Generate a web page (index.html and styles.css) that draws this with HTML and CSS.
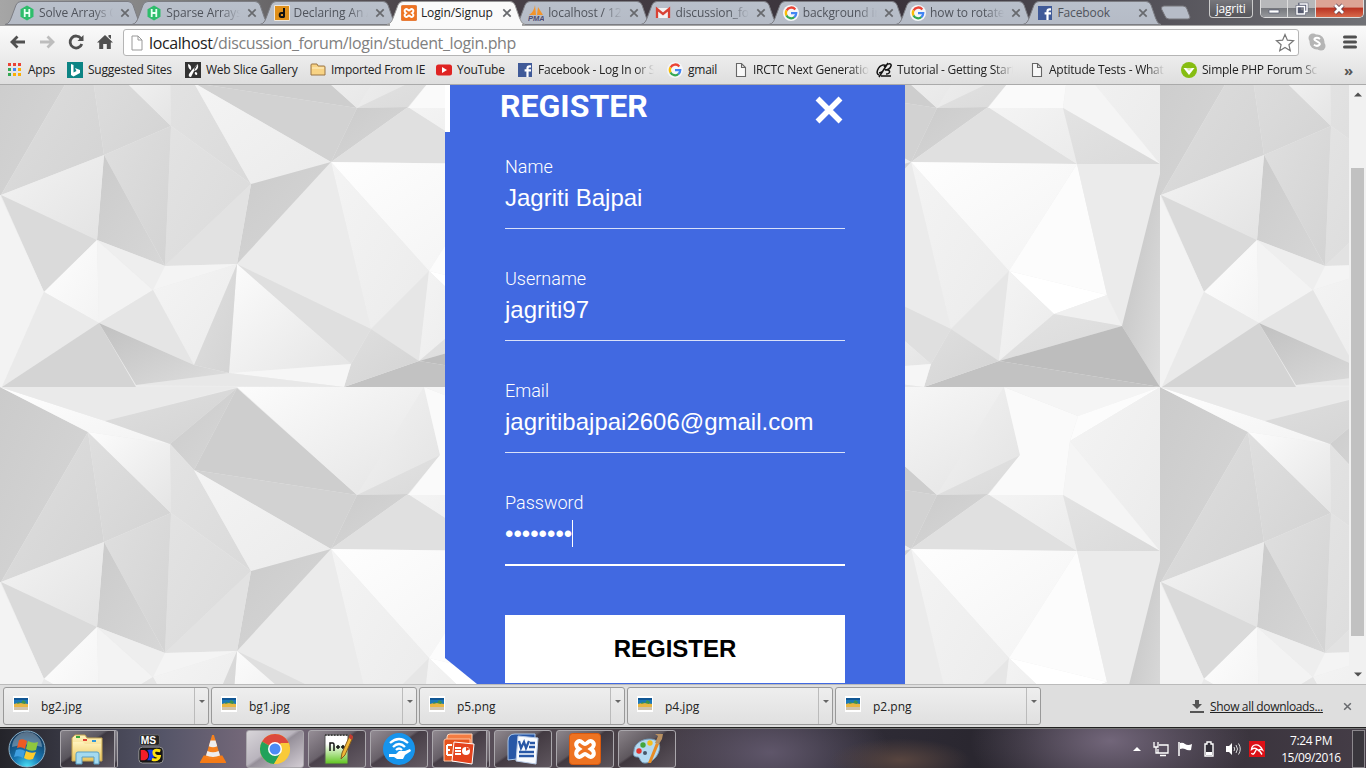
FILE: index.html
```html
<!DOCTYPE html>
<html lang="en">
<head>
<meta charset="utf-8">
<title>Login/Signup</title>
<link rel="stylesheet" href="styles.css">
</head>
<body>
<svg class="defs" width="0" height="0" aria-hidden="true">
<defs>
<linearGradient id="tabfill" x1="0" y1="0" x2="0" y2="1"><stop offset="0" stop-color="#b9c0cb"/><stop offset="1" stop-color="#b5bbc6"/></linearGradient>
<linearGradient id="g1" x1="0" y1="0" x2="1" y2="1"><stop offset="0" stop-color="#cbcbcb"/><stop offset="1" stop-color="#d7d7d7"/></linearGradient>
<linearGradient id="g2" x1="0" y1="0" x2="1" y2="1"><stop offset="0" stop-color="#dfdfdf"/><stop offset="1" stop-color="#d3d3d3"/></linearGradient>
<linearGradient id="g3" x1="0" y1="0" x2="1" y2="1"><stop offset="0" stop-color="#e3e3e3"/><stop offset="1" stop-color="#dadada"/></linearGradient>
<linearGradient id="g4" x1="0" y1="0" x2="1" y2="1"><stop offset="0" stop-color="#f3f3f3"/><stop offset="1" stop-color="#e3e3e3"/></linearGradient>
<linearGradient id="g5" x1="0" y1="0" x2="1" y2="1"><stop offset="0" stop-color="#fefefe"/><stop offset="1" stop-color="#f3f3f3"/></linearGradient>
<linearGradient id="g6" x1="0" y1="0" x2="1" y2="1"><stop offset="0" stop-color="#fcfcfc"/><stop offset="1" stop-color="#e4e4e4"/></linearGradient>
<linearGradient id="g7" x1="0" y1="0" x2="1" y2="1"><stop offset="0" stop-color="#f4f4f4"/><stop offset="1" stop-color="#ebebeb"/></linearGradient>
<linearGradient id="g8" x1="0" y1="0" x2="1" y2="1"><stop offset="0" stop-color="#c0c0c0"/><stop offset="1" stop-color="#dedede"/></linearGradient>
<radialGradient id="orb" cx=".5" cy="1" r=".95"><stop offset="0" stop-color="#4be3f7"/><stop offset=".4" stop-color="#1878b4"/><stop offset="1" stop-color="#103355"/></radialGradient>
<linearGradient id="folder" x1="0" y1="0" x2="0" y2="1"><stop offset="0" stop-color="#fff3bd"/><stop offset="1" stop-color="#ecc75f"/></linearGradient>
<linearGradient id="green" x1="0" y1="0" x2="0" y2="1"><stop offset=".3" stop-color="#fff"/><stop offset="1" stop-color="#5fc41e"/></linearGradient>
<symbol id="tab" viewBox="0 0 138 25"><path d="M0 24.500C4 23.500 5 21 6.500 17L11 5Q12.500 1.500 16 1.500H123Q126.500 1.500 128 5L132.500 18Q134.500 24 138 24.500Z"/></symbol>
<symbol id="close" viewBox="0 0 10 10"><path d="M1.300 1.300L8.700 8.700M8.700 1.300L1.300 8.700" stroke="#686a6e" stroke-width="1.700"/></symbol>
<symbol id="hr" viewBox="0 0 16 16"><path d="M8 .5L14.500 4.200V11.800L8 15.500L1.500 11.800V4.200Z" fill="#2ebd6b"/><path d="M5.700 4V12M10.300 4V12M5.700 8H10.300" stroke="#e5fff0" stroke-width="1.800"/></symbol>
<symbol id="google" viewBox="0 0 16 16"><circle cx="8" cy="8" r="8" fill="#f5f6f8"/><path d="M12.300 4.400A5.200 5.200 0 0 0 3.600 5.500" stroke="#ea4335" stroke-width="2.300" fill="none"/><path d="M3.600 5.400A5.200 5.200 0 0 0 3.600 10.700" stroke="#fbbc05" stroke-width="2.300" fill="none"/><path d="M3.500 10.500A5.200 5.200 0 0 0 11.500 12" stroke="#34a853" stroke-width="2.300" fill="none"/><path d="M8 8.200H13.200A5.200 5.200 0 0 1 11.300 12.100" stroke="#4285f4" stroke-width="2.300" fill="none"/></symbol>
<symbol id="fb" viewBox="0 0 16 16"><path d="M1 1H15V15H1Z" fill="#405a98"/><path d="M10.500 15V6.300Q10.500 4.300 12.500 4.300H14M7.600 8.400H14" stroke="#fff" stroke-width="2.200" fill="none"/></symbol>
<symbol id="doc" viewBox="0 0 16 16"><path d="M3.500 1.500H8.500L12.500 5.500V14.500H3.500ZM8.500 1.500V5.500H12.500" fill="#f8f8f8" stroke="#666" stroke-width="1.100"/></symbol>
<symbol id="xampp" viewBox="0 0 32 32"><rect x=".5" y=".5" width="31" height="31" rx="3" fill="#ee7322" stroke="#d9590e"/><path d="M9 8.500C12 6.500 14 11 16 11S20 6.500 23 8.500S25 14 22 16C25 18 26 21.500 23 23.500S18 21 16 21S12 25.500 9 23.500S7 18 10 16C7 14 6 10.500 9 8.500Z" fill="none" stroke="#fff" stroke-width="4"/></symbol>
<symbol id="pic" viewBox="0 0 16 16"><path d="M0 0H16V16H0Z" fill="#fff"/><path d="M1 2H15V8H1Z" fill="#1b78b8"/><path d="M1 2H15V4H1Z" fill="#105694"/><path d="M1 8Q6 6 15 8V11H1Z" fill="#e8b642"/><path d="M4 8L5 6L8 7L10 4L13 6L12 8L8 7Z" fill="#3f9348"/><path d="M1 11H15V14H1Z" fill="#cfc3ad"/></symbol>
<symbol id="tile" viewBox="0 0 580 387">
<rect width="580" height="387" fill="#ececec"/>
<path d="M0 0L88 45L1 195H0Z" fill="url(#g1)"/><path d="M88 45L104 155L1 195Z" fill="url(#g2)"/><path d="M88 45L171 126L104 155Z" fill="url(#g2)"/><path d="M88 45L170 57L171 126Z" fill="url(#g6)"/><path d="M0 0L105 34L170 57L88 45Z" fill="url(#g5)"/><path d="M0 0H237L105 34Z" fill="#eaeaea"/><path d="M105 34L237 1L170 57Z" fill="url(#g2)"/><path d="M170 57L237 1L194 83Z" fill="url(#g1)"/><path d="M170 57L194 83L251 184L171 126Z" fill="url(#g3)"/>
<path d="M237 1L194 83L357 108Z" fill="#cecece"/><path d="M194 83L357 108L331 162Z" fill="#d2d2d2"/><path d="M194 83L331 162L251 184Z" fill="url(#g7)"/><path d="M237 0H424L357 108Z" fill="url(#g6)"/><path d="M424 0L440 68L357 108Z" fill="url(#g4)"/><path d="M440 68L408 107L357 108Z" fill="url(#g3)"/><path d="M357 108L408 107L331 162Z" fill="url(#g1)"/><path d="M408 107L497 164L331 162Z" fill="#e0e0e0"/><path d="M408 107L483 108L497 164Z" fill="url(#g7)"/><path d="M424 0L498 29L490 54L483 108H408L440 68Z" fill="#fafafa"/><path d="M424 0H580L498 29Z" fill="#f5f5f5"/><path d="M498 29L580 0L490 54Z" fill="#fcfcfc"/><path d="M490 54L580 0V164Z" fill="url(#g7)"/><path d="M490 54L580 164L483 108Z" fill="#f5f5f5"/><path d="M483 108L580 164H497Z" fill="url(#g3)"/>
<path d="M331 162L497 164L429 271Z" fill="url(#g5)"/><path d="M331 162L429 271L371 329Z" fill="url(#g7)"/><path d="M497 164L429 271L527 295Z" fill="#fcfcfc"/><path d="M429 271L527 295L474 314Z" fill="#fff"/><path d="M527 295L542 326L474 314Z" fill="#f0f0f0"/><path d="M497 164H580V174L542 326L527 295Z" fill="#ebebeb"/><path d="M580 174V387L542 326Z" fill="url(#g8)"/><path d="M429 271L371 329L419 361Z" fill="#e6e6e6"/><path d="M429 271L474 314L419 361Z" fill="url(#g7)"/><path d="M474 314L542 326L419 361Z" fill="url(#g3)"/><path d="M419 361L542 326L580 387Z" fill="#bdbdbd"/><path d="M419 361L580 387H344Z" fill="#c2c2c2"/><path d="M371 329L419 361L344 387L351 364Z" fill="url(#g2)"/>
<path d="M331 162L371 329L237 264Z" fill="#ebebeb"/><path d="M237 264L371 329L351 364Z" fill="#dfdfdf"/><path d="M237 264L351 364L229 373Z" fill="url(#g6)"/><path d="M229 373L351 364L344 387Z" fill="#f6f6f6"/><path d="M136 385L229 373L344 387Z" fill="#e8e8e8"/><path d="M251 184L331 162L237 264Z" fill="url(#g1)"/><path d="M251 184L237 264L165 266Z" fill="#e2e2e2"/><path d="M171 126L251 184L165 266Z" fill="url(#g3)"/><path d="M104 155L171 126L165 266Z" fill="url(#g2)"/><path d="M104 155L97 240L165 266Z" fill="url(#g1)"/><path d="M1 195L104 155L97 240Z" fill="url(#g4)"/><path d="M1 195L97 240L44 292Z" fill="#dadada"/><path d="M0 195L44 292L2 387H0Z" fill="#f3f3f3"/><path d="M97 240L44 292L99 323Z" fill="url(#g5)"/><path d="M97 240L153 290L99 323Z" fill="#f3f3f3"/><path d="M97 240L165 266L153 290Z" fill="#eee"/><path d="M165 266L237 264L153 290Z" fill="#f4f4f4"/><path d="M153 290L237 264L194 365Z" fill="url(#g7)"/><path d="M237 264L229 373L194 365Z" fill="url(#g2)"/><path d="M99 323L153 290L194 365Z" fill="#e5e5e5"/><path d="M44 292L99 323L2 387Z" fill="#eaeaea"/><path d="M2 387L99 323L136 387Z" fill="#d4d4d4"/><path d="M99 323L194 365L229 373L136 385Z" fill="url(#g8)"/>
</symbol>
</defs>
</svg>

<header class="strip">
<nav class="tabs">
<div class="tab"><svg class="shape"><use href="#tab"/></svg><svg class="fav"><use href="#hr"/></svg><span class="tt">Solve Arrays Co</span><svg class="x"><use href="#close"/></svg></div>
<div class="tab"><svg class="shape"><use href="#tab"/></svg><svg class="fav"><use href="#hr"/></svg><span class="tt">Sparse Arrays |</span><svg class="x"><use href="#close"/></svg></div>
<div class="tab"><svg class="shape"><use href="#tab"/></svg><svg class="fav" viewBox="0 0 16 16"><path d="M.5.5H15.500V15.500H.5Z" fill="#e0901a" stroke="#efe7dc"/><path d="M10 3V12.500M10 8H7.300A1.600 2 0 0 0 7.300 12H10" stroke="#111" stroke-width="2" fill="none"/></svg><span class="tt">Declaring An Ar</span><svg class="x"><use href="#close"/></svg></div>
<div class="tab active"><svg class="shape"><use href="#tab"/></svg><svg class="fav"><use href="#xampp"/></svg><span class="tt whole">Login/Signup</span><svg class="x"><use href="#close"/></svg></div>
<div class="tab"><svg class="shape"><use href="#tab"/></svg><svg class="fav" viewBox="0 0 16 16"><path d="M7 0L8 10H1Q6 7 7 0ZM10 2L15 10H9Z" fill="#f2942b"/><text x="0" y="16" class="pma">PMA</text></svg><span class="tt">localhost / 127.</span><svg class="x"><use href="#close"/></svg></div>
<div class="tab"><svg class="shape"><use href="#tab"/></svg><svg class="fav" viewBox="0 0 16 16"><path d="M2 3H14V13H2Z" fill="#f2f2f2"/><path d="M2 13V4L8 9L14 4V13" fill="none" stroke="#d94235" stroke-width="2.300"/></svg><span class="tt">discussion_foru</span><svg class="x"><use href="#close"/></svg></div>
<div class="tab"><svg class="shape"><use href="#tab"/></svg><svg class="fav"><use href="#google"/></svg><span class="tt">background im</span><svg class="x"><use href="#close"/></svg></div>
<div class="tab"><svg class="shape"><use href="#tab"/></svg><svg class="fav"><use href="#google"/></svg><span class="tt">how to rotate t</span><svg class="x"><use href="#close"/></svg></div>
<div class="tab"><svg class="shape"><use href="#tab"/></svg><svg class="fav"><use href="#fb"/></svg><span class="tt whole">Facebook</span><svg class="x"><use href="#close"/></svg></div>
</nav>
<svg class="newtab" viewBox="0 0 32 16"><path d="M4 1H23Q26 1 27 4L30 12Q30 14 28 14H9Q6 14 5 11L1.500 4Q1 1 4 1Z" fill="#b6bcc7" stroke="#77767b"/></svg>
<div class="user">jagriti</div>
<div class="winbtns"><span><svg viewBox="0 0 14 14"><path d="M2 8H12V11H2Z" fill="#fff" stroke="#555a70" stroke-width=".7"/></svg></span><span><svg viewBox="0 0 14 14"><path d="M4.500 2H12V9.500H4.500ZM2 4.500H9.500V12H2Z" fill="none" stroke="#555a70" stroke-width="2.600"/><path d="M4.500 2H12V9.500H9.500M2 4.500H9.500V12H2Z" fill="none" stroke="#fff" stroke-width="1.500"/></svg></span><span class="red"><svg viewBox="0 0 14 14"><path d="M3 3L11 11M11 3L3 11" stroke="#5b3a48" stroke-width="4.200"/><path d="M3 3L11 11M11 3L3 11" stroke="#fff" stroke-width="2.800"/></svg></span></div>
</header>

<div class="toolbar">
<div class="nav">
<svg viewBox="0 0 18 18"><path d="M16 9H3M8.500 3.500L3 9L8.500 14.500" class="bold"/></svg>
<svg viewBox="0 0 18 18"><path d="M2 9H15M9.500 3.500L15 9L9.500 14.500" class="bold pale"/></svg>
<svg viewBox="0 0 18 18"><path d="M14 5.500A6 6 0 1 0 14.800 11" class="bold"/><path d="M16.500 2V8H10.500Z" fill="#505050"/></svg>
<svg viewBox="0 0 18 18"><path d="M9 2L17 9.500H14.800V16H10.800V11H7.200V16H3.200V9.500H1ZM12.500 2H15V6L12.500 4Z" fill="#505050"/></svg>
</div>
<div class="url"><svg class="page" viewBox="0 0 16 16"><path d="M3 1H9L13 5V15H3ZM9 1V5H13" fill="#fff" stroke="#999"/></svg><span class="host">localhost</span><span>/discussion_forum/login/student_login.php</span>
<svg class="star" viewBox="0 0 20 20"><path d="M10 1.500L12.400 7.200L18.500 7.700L13.900 11.700L15.300 17.700L10 14.500L4.700 17.700L6.100 11.700L1.500 7.700L7.600 7.200Z" fill="#fff" stroke="#777" stroke-width="1.200"/></svg></div>
<svg class="skype" viewBox="0 0 20 20"><circle cx="10" cy="10" r="7.500" fill="#b5b5b5"/><circle cx="6" cy="6" r="4.500" fill="#b5b5b5"/><circle cx="14" cy="14" r="4.500" fill="#b5b5b5"/><path d="M13 7Q10 4.800 7.600 6.600C6 9 13.500 9.500 12.800 12.300Q10.500 15.300 6.900 12.700" stroke="#fff" stroke-width="2" fill="none"/></svg>
<svg class="menu" viewBox="0 0 14 14"><path d="M1.500 2H12.500M1.500 7H12.500M1.500 12H12.500" stroke="#505050" stroke-width="3" stroke-linecap="round"/></svg>
</div>

<div class="bookmarks">
<div><svg viewBox="0 0 16 16"><path d="M1 1h3v3H1z M6 1h3v3H6z M11 1h3v3h-3z" fill="#ea4335"/><path d="M1 6h3v3H1z M1 11h3v3H1z" fill="#34a853"/><path d="M6 6h3v3H6z" fill="#4285f4"/><path d="M11 6h3v3h-3z M6 11h3v3H6z M11 11h3v3h-3z" fill="#fbaf05"/></svg><span>Apps</span></div>
<div><svg viewBox="0 0 16 16"><path d="M0 0H16V16H0Z" fill="#0c8484"/><path d="M4 2L6.500 3V10.500L9.500 9L8 6L13 8V11L6.500 14.500L4 13Z" fill="#fff"/></svg><span>Suggested Sites</span></div>
<div><svg viewBox="0 0 16 16"><path d="M0 0H16V16H0Z" fill="#333"/><path d="M3 2Q7 3 6 8Q3 7 3 2ZM13 2Q9 4 9 9L6 15Q3 15 4 12L7 8M9 9Q14 8 13 2M10 10Q13 10 12 13Q9 13 10 10" fill="#fff"/></svg><span>Web Slice Gallery</span></div>
<div><svg viewBox="0 0 16 16"><path d="M1 3Q1 2 2 2H7L8 4H14Q15 4 15 5V13H1Z" fill="#f8d384" stroke="#9a7544"/><path d="M2 6H14" stroke="#fff1c8"/></svg><span>Imported From IE</span></div>
<div><svg viewBox="0 0 16 16"><rect y="2.500" width="16" height="11" rx="2.500" fill="#df2423"/><path d="M6 5L11 8L6 11Z" fill="#fff"/></svg><span>YouTube</span></div>
<div class="cut"><svg><use href="#fb"/></svg><span>Facebook - Log In or S</span></div>
<div><svg><use href="#google"/></svg><span>gmail</span></div>
<div class="cut doc"><svg><use href="#doc"/></svg><span>IRCTC Next Generation</span></div>
<div class="cut"><svg viewBox="0 0 16 16"><path d="M3 13C-1 12 2 4 7 3S8 10 3 11M12 1L3 15M8 5C11 1 16 1 15 4S11 8 9 8C15 7 15 12 10 12M5 14H15" fill="none" stroke="#111" stroke-width="1.500"/></svg><span>Tutorial - Getting Start</span></div>
<div class="cut doc aptitude"><svg><use href="#doc"/></svg><span>Aptitude Tests - What i</span></div>
<div class="cut"><svg viewBox="0 0 16 16"><circle cx="8" cy="8" r="8" fill="#86bd12"/><path d="M2.500 6H13.500L8 13Z" fill="#fff"/><path d="M5 6H11L8 9Z" fill="#d8ecaa"/></svg><span>Simple PHP Forum Scri</span></div>
<b>»</b>
</div>

<main class="view">
<svg class="bg" width="1349" height="687" viewBox="0 0 1349 687"><use href="#tile" width="580" height="387"/><use href="#tile" x="580" width="580" height="387"/><use href="#tile" x="1160" width="580" height="387"/><use href="#tile" y="387" width="580" height="387"/><use href="#tile" x="580" y="387" width="580" height="387"/><use href="#tile" x="1160" y="387" width="580" height="387"/></svg>
<section class="panel">
<div class="head"><h1>REGISTER</h1><svg viewBox="0 0 28 28"><path d="M2.500 2.500L25.500 25.500M25.500 2.500L2.500 25.500" stroke="#fff" stroke-width="5.500"/></svg></div>
<div class="field"><label>Name</label><p>Jagriti Bajpai</p></div>
<div class="field"><label>Username</label><p>jagriti97</p></div>
<div class="field"><label>Email</label><p>jagritibajpai2606@gmail.com</p></div>
<div class="field focus"><label>Password</label><p><span class="dots">••••••••</span><i></i></p></div>
<button>REGISTER</button>
</section>
<div class="edge"></div>
<aside class="scroll"><svg viewBox="0 0 8 5"><path d="M0 4.500L4 .5L8 4.500Z" fill="#505050"/></svg><div class="thumb"></div><svg viewBox="0 0 8 5"><path d="M0 .5L4 4.500L8 .5Z" fill="#505050"/></svg></aside>
</main>

<div class="downloads">
<div class="dl"><svg><use href="#pic"/></svg><span>bg2.jpg</span><b></b></div>
<div class="dl"><svg><use href="#pic"/></svg><span>bg1.jpg</span><b></b></div>
<div class="dl"><svg><use href="#pic"/></svg><span>p5.png</span><b></b></div>
<div class="dl"><svg><use href="#pic"/></svg><span>p4.jpg</span><b></b></div>
<div class="dl"><svg><use href="#pic"/></svg><span>p2.png</span><b></b></div>
<svg class="dlicon" viewBox="0 0 14 14"><path d="M5 0H9V4H12L7 9L2 4H5ZM0 11H14V13H0Z" fill="#555"/></svg><a>Show all downloads...</a><svg class="dlx"><use href="#close"/></svg>
</div>

<footer class="taskbar">
<svg class="start" viewBox="0 0 38 38"><circle cx="19" cy="19" r="18" fill="url(#orb)" stroke="#8eb4cc"/><path d="M4 17A15 15 0 0 1 34 17Q19 12 4 17Z" fill="#fff" opacity=".3"/><path d="M11 10Q15 8 19 11L17 19Q13 16 9 18Z" fill="#ed5b24"/><path d="M20 11Q25 14 30 12L28 20Q23 22 18 19Z" fill="#8fc73e"/><path d="M8 20Q13 18 17 21L15 28Q11 25 6 27Z" fill="#3f9fe0"/><path d="M18 21Q23 24 28 22L25 29Q20 31 16 28Z" fill="#fccb2d"/></svg>
<div class="btn multi"><svg viewBox="0 0 32 32"><path d="M1 5L4 2H14L16 5H31V28H1Z" fill="url(#folder)" stroke="#c5a552"/><path d="M5 3H9V5H5Z" fill="#37a53b"/><path d="M12 6H16V8H12Z" fill="#dd4132"/><path d="M21 7H25V9H21Z" fill="#3498d8"/><path d="M2 9H12L14 11H30V27H2Z" fill="url(#folder)"/><path d="M5 31V21Q5 19 7 19H26Q28 19 28 21V31H23V24H11V31Z" fill="#a4daf0" stroke="#5a9fc4"/></svg></div>
<div class="plain"><svg viewBox="0 0 32 32"><rect x="4" y="1" width="21" height="11" rx="2" fill="#222" stroke="#666"/><text x="5" y="11" class="ms">MS</text><rect x="3" y="14" width="26" height="17" rx="4" fill="#161616" stroke="#999"/><path d="M5 17H9Q13 19 13 23T9 28H5Z" fill="#f31d29"/><path d="M12 17Q21 15 20 22T12 28Q16 22 12 17Z" fill="#183be4"/><path d="M26 18Q19 16 19 20T25 24Q24 29 17 27" stroke="#ffe112" stroke-width="3" fill="none"/></svg></div>
<div class="plain"><svg viewBox="0 0 32 32"><path d="M6 23H26L30 30Q30 31 29 31H3Q2 31 2 30Z" fill="#f47b16"/><path d="M15 1H17L24 25Q16 29 8 25Z" fill="#f58220"/><path d="M13.300 7H18.700L20.500 13Q16 15 11.500 13ZM10 18Q16 21 22 18L23.500 23Q16 26 8.500 23Z" fill="#eee"/></svg></div>
<div class="btn lit"><svg viewBox="0 0 32 32"><circle cx="16" cy="16" r="15" fill="#f9ca38"/><path d="M16 16L3 8.500A15 15 0 0 1 29 8.500L31 14Z" fill="#dc4a3d"/><path d="M16 16L3 8.500A15 15 0 0 0 15 31L22 20Z" fill="#22a25b"/><path d="M16 16L22 10H29.800A15 15 0 0 1 15 31L22 19Z" fill="#f9ca38"/><circle cx="16" cy="16" r="7" fill="#fff"/><circle cx="16" cy="16" r="5.500" fill="#4c8bf5"/></svg></div>
<div class="btn"><svg viewBox="0 0 32 32"><path d="M4 2H27V31H4Z" fill="url(#green)" stroke="#555"/><path d="M4 2H27" stroke="#444" stroke-width="2" stroke-dasharray="1.500 1.500"/><path d="M9 18V10H12Q13 10 13 12V18M15 14H19M17 12V16M20 14H24M22 12V16" stroke="#111" fill="none" stroke-width="1.500"/><path d="M20 26L21 20L29 2L32 4L24 22Z" fill="#efb635" stroke="#875d1d"/><path d="M29 1L32 3L31 7L28 5Z" fill="#c33b34"/></svg></div>
<div class="btn"><svg viewBox="0 0 32 32"><circle cx="16" cy="16" r="16" fill="#1694ec"/><path d="M7 10Q16 2 25 10M10 14Q16 8 22 14M13 17Q16 14 19 17" fill="none" stroke="#fff" stroke-width="2.300"/><path d="M6 21H13L16 18H22L27 16L28 18L22 22L20 26H14L11 24H6Z" fill="#fff"/></svg></div>
<div class="btn multi"><svg viewBox="0 0 32 32"><path d="M4 4Q4 1 7 1H29V15H4Z" fill="#f47c42" stroke="#ffd5bb"/><path d="M1 8Q1 6 3 6H27V28H1Z" fill="#e6531d" stroke="#ffc6a3"/><path d="M11 9L31 11L29 31L9 28Z" fill="#e4431d" stroke="#fff"/><path d="M4 12H9M4 17H7M4 22H9M4 12V22M12 15H18M12 18H18M12 21H18" stroke="#fff" stroke-width="2"/><circle cx="23" cy="18" r="4" fill="#fff"/><path d="M23 18V14L27 16Z" fill="#e4431d"/></svg></div>
<div class="btn"><svg viewBox="0 0 32 32"><path d="M1 8Q1 1 8 1H28V24L1 27Z" fill="#2857a6" stroke="#a7c5e9"/><path d="M11 3L31 5L29 31L9 28Z" fill="#f8fbff" stroke="#b7c9e5"/><path d="M12 8L14 15L17 9L19 15L22 8" fill="none" stroke="#2857a6" stroke-width="2.300"/><path d="M23 10H28M22 14H28M12 19H27M12 23H27" stroke="#2857a6" stroke-width="2.300"/></svg></div>
<div class="btn"><svg><use href="#xampp"/></svg></div>
<div class="btn"><svg viewBox="0 0 32 32"><path d="M3 18C3 8 18 3 26 8C33 14 25 29 15 30C9 31 9 24 7 24S1 24 3 18Z" fill="#b4daf1" stroke="#739bb9"/><circle cx="8" cy="18" r="2.700" fill="#e2342e"/><circle cx="12" cy="12" r="2.700" fill="#44a63c"/><circle cx="19" cy="10" r="2.700" fill="#f2bd21"/><circle cx="14" cy="20" r="2" fill="#45576a"/><path d="M17 30L25 10L28 11L20 30Z" fill="#e68b24"/><path d="M24 10L27 3L24 1L32 1L31 6L28 11Z" fill="#b99061"/></svg></div>
<div class="tray">
<svg viewBox="0 0 16 16"><path d="M4 10L8 6L12 10Z" fill="#fff"/></svg>
<svg viewBox="0 0 16 16"><path d="M6 4H15V12H5V8M7 14.500H13M1 1V6H5V1M3 6V12H6" fill="none" stroke="#fff" stroke-width="1.300"/></svg>
<svg viewBox="0 0 16 16"><path d="M2 1V15" stroke="#fff" stroke-width="1.500"/><path d="M3 2Q6 1 8 3Q11 5 15 3L14 9Q11 10 8 8Q6 7 3 8Z" fill="#fff"/></svg>
<svg viewBox="0 0 16 16"><path d="M6 1H10V3H12V15H4V3H6Z" fill="#322f38" stroke="#fff" stroke-width="1.400"/><path d="M5 11H11V14H5Z" fill="#fff"/></svg>
<svg viewBox="0 0 16 16"><path d="M1 5H4L7 2V14L4 11H1Z" fill="#fff"/><path d="M9 6Q10.500 8 9 10M11 4Q14 8 11 12M13.500 2.500Q17 8 13.500 13.500" fill="none" stroke="#ddd"/></svg>
<svg viewBox="0 0 16 16"><path d="M0 0H16V16H0Z" fill="#dc1117"/><path d="M2.500 8.500C3 3 10 1.500 13.500 9Q11 7.500 9.500 9.500Q6.500 5.500 2.500 8.500ZM8 7.500L5 12.500Q3.500 14 2.500 12M10 9L13 13.500" fill="none" stroke="#fff" stroke-width="1.400"/></svg>
</div>
<div class="clock">7:24 PM<br>15/09/2016</div>
<div class="peek"></div>
</footer>
</body>
</html>
```
FILE: styles.css
```css
* { box-sizing: border-box; }
body { margin: 0; width: 1366px; height: 768px; overflow: hidden; font: 12px/16px "Open Sans", "Noto Sans", sans-serif; color: #222; background: #ddd; }
svg { display: block; flex: none; }
.defs { position: absolute; }
.strip { height: 25px; display: flex; align-items: flex-start; background: linear-gradient(90deg, #a6a6a6, #777 15%, #4a4349 30%, #39323a 65%, #55535a 85%, #707176); }
.tabs { display: flex; padding-left: 5px; height: 25px; }
.tab { position: relative; width: 127.3px; height: 25px; display: flex; align-items: center; padding-left: 14px; color: #50545c; }
.shape { position: absolute; left: 0; top: 0; width: 138px; height: 25px; fill: url(#tabfill); stroke: #7c7d83; stroke-width: 1; overflow: visible; }
.tab.active { z-index: 2; color: #222; }
.tab.active .shape { fill: #fafafa; stroke: #999; }
.tab.active::after { content: ""; position: absolute; left: 3px; right: -8px; bottom: -1px; height: 2px; background: #fafafa; }
.fav { position: relative; width: 16px; height: 16px; margin-right: 4px; }
.tt { position: relative; width: 78px; overflow: hidden; white-space: nowrap; letter-spacing: -.1px; -webkit-mask-image: linear-gradient(90deg, #000 70%, transparent 95%); mask-image: linear-gradient(90deg, #000 70%, transparent 95%); }
.tt.whole { -webkit-mask-image: none; mask-image: none; }
.x { position: relative; width: 10px; height: 10px; margin-left: 3px; }
.pma { font: italic bold 7.500px "Liberation Sans", sans-serif; fill: #4b4d75; }
.newtab { width: 32px; height: 16px; margin: 5px 0 0 9px; }
.user { margin-left: 17px; width: 44px; height: 18px; border: 1px solid #ccc; border-top: 0; border-radius: 0 0 4px 4px; background: linear-gradient(#77777c, #55555a); color: #fff; text-align: center; line-height: 17px; letter-spacing: -.2px; }
.winbtns { display: flex; margin-left: 7px; border: 1px solid #ddd; border-top: 0; border-radius: 0 0 5px 5px; overflow: hidden; width: 104px; height: 18px; }
.winbtns span { width: 28px; background: linear-gradient(#b7b8ba 45%, #77797e 50%, #96979b); border-right: 1px solid #ddd; display: flex; justify-content: center; align-items: center; }
.winbtns span.red { width: 47px; background: linear-gradient(#dca395 40%, #bb3524 50%, #d8694b); border: 0; }
.winbtns svg { width: 14px; height: 14px; }
.toolbar { height: 33px; display: flex; align-items: center; background: linear-gradient(#fafafa, #ececec); border-top: 1px solid #a5a5a5; padding-left: 9px; }
.nav { display: flex; gap: 11px; width: 114px; }
.nav svg { width: 18px; height: 18px; }
.bold { fill: none; stroke: #505050; stroke-width: 2.800; }
.pale { stroke: #bdbdbd; }
.url { width: 1176px; height: 27px; margin-top: 1px; background: #fff; border: 1px solid #b5b5b5; border-radius: 3px; display: flex; align-items: center; font-size: 16px; color: #808080; padding-left: 5px; letter-spacing: -.38px; }
.url .page { width: 16px; height: 18px; margin-right: 4px; }
.host { color: #222; }
.star { width: 20px; height: 20px; margin-left: auto; margin-right: 3px; }
.skype { width: 20px; height: 20px; margin-left: 8px; }
.menu { width: 14px; height: 14px; margin-left: 16px; }
.bookmarks { height: 27px; border-bottom: 1px solid #aaa; background: linear-gradient(#ececec, #dedede); padding: 0 0 2px 7px; display: grid; align-items: center; grid-template-columns: 60px 118px 125px 126px 81px 150px 66px 143px 156px 149px 163px 20px; }
.bookmarks div { display: flex; align-items: center; white-space: nowrap; overflow: hidden; letter-spacing: -.24px; }
.bookmarks svg { width: 16px; height: 16px; margin-right: 5px; }
.bookmarks .doc svg { margin-right: 4px; }
.bookmarks .aptitude { margin-left: -3px; }
.bookmarks .cut span { width: 116px; overflow: hidden; -webkit-mask-image: linear-gradient(90deg, #000 84%, transparent); mask-image: linear-gradient(90deg, #000 84%, transparent); }
.bookmarks b { font-size: 15px; color: #555; }
.view { position: relative; height: 599px; overflow: hidden; display: flex; justify-content: flex-end; }
.bg { position: absolute; left: 0; top: -85px; }
.panel { position: absolute; left: 445px; top: 0; width: 460px; height: 599px; padding: 0 60px; background: #4169e1; clip-path: polygon(0 0, 100% 0, 100% 100%, 32px 100%, 0 573px); color: #fff; }
.edge { position: absolute; left: 445px; top: 0; width: 5px; height: 47px; background: #fff; }
.head { display: flex; justify-content: space-between; height: 71px; margin-left: -5px; }
.head h1 { margin: 0; font: bold 32px/42px Roboto, sans-serif; }
.head svg { width: 28px; height: 28px; margin: 11px 2px 0 0; }
.field { height: 73px; margin-bottom: 39px; border-bottom: 1px solid #d9e1f9; }
.field.focus { height: 74px; border-bottom: 2px solid #fff; margin-bottom: 49px; }
.field label { display: block; font: 300 18px/22px Roboto, sans-serif; }
.field p { margin: 0; height: 40px; display: flex; align-items: center; font: 24px/40px "Liberation Sans", sans-serif; }
.field .dots { width: 67px; }
.field i { width: 1px; height: 27px; margin-top: -1px; background: #fff; }
.panel button { display: block; width: 340px; height: 68px; border: 0; padding: 0; background: #fff; color: #000; font: bold 24px/68px "Liberation Sans", sans-serif; }
.scroll { position: relative; width: 17px; background: #f1f1f1; display: flex; flex-direction: column; align-items: center; }
.scroll svg { width: 8px; height: 5px; margin: 7px 0; }
.thumb { width: 13px; height: 468px; margin-top: 64px; margin-bottom: auto; background: #c1c1c1; }
.downloads { height: 44px; background: #dedede; border-top: 1px solid #bbb; border-bottom: 1px solid #222; display: flex; align-items: center; padding: 0 0 0 3px; }
.dl { width: 206px; height: 38px; margin-right: 2px; border: 1px solid #999; border-radius: 3px; background: linear-gradient(#eee, #e0e0e0); display: flex; align-items: center; padding-left: 9px; flex: none; }
.dl svg { width: 16px; height: 16px; margin-right: 12px; margin-top: -4px; }
.dl span { padding-top: 2px; }
.dl b { margin-left: auto; width: 14px; height: 36px; border-left: 1px solid #bbb; padding: 12px 0 0 4px; }
.dl b::before { content: ""; display: block; border: 3px solid transparent; border-top-color: #666; width: 0; }
.dlicon { width: 14px; height: 14px; margin: 1px 6px 0 147px; }
.downloads a { text-decoration: underline; letter-spacing: -.34px; width: 133px; white-space: nowrap; padding-top: 2px; }
.dlx { width: 9px; height: 9px; }
.taskbar { height: 40px; display: flex; align-items: center; background: radial-gradient(ellipse 140px 70px at 1110px 30%, #72667a, transparent), radial-gradient(ellipse 70px 22px at 900px 80%, #58453f, transparent), radial-gradient(ellipse 120px 60px at 770px 60%, #5f566a, transparent), linear-gradient(90deg, #24242a, #555568 12%, #746879 18%, #4a4148 45%, #302d38 60%, #28252d 75%, #453d47); border-top: 1px solid #777; }
.start { width: 38px; height: 38px; margin: 0 14px 0 8px; }
.btn, .plain { width: 58px; height: 38px; margin-right: 4px; display: flex; justify-content: center; align-items: center; flex: none; }
.btn { border: 1px solid #aaa7ac; border-radius: 3px; background: linear-gradient(145deg, #aaa4a9aa, #696369aa 42%, #3a3239aa 46%, #665e65aa); }
.btn.lit { background: linear-gradient(145deg, #d8d5d9, #b9b4bd 45%, #958f99 50%, #d3cdd4); }
.btn.multi { border-right: 4px double #aaa7ac; padding-right: 1px; }
.taskbar .btn svg { width: 32px; height: 32px; }
.plain svg { width: 30px; height: 30px; }
.ms { font: bold 11px "Liberation Sans", sans-serif; fill: #fff; }
.tray { display: flex; gap: 8px; margin-left: auto; }
.tray svg { width: 16px; height: 16px; }
.clock { width: 80px; text-align: center; color: #fff; line-height: 17px; letter-spacing: -.4px; margin-left: 6px; }
.peek { width: 13px; height: 38px; border: 1px solid #8c888d; background: #39363c; margin-left: 1px; margin-right: 1px; }
```
